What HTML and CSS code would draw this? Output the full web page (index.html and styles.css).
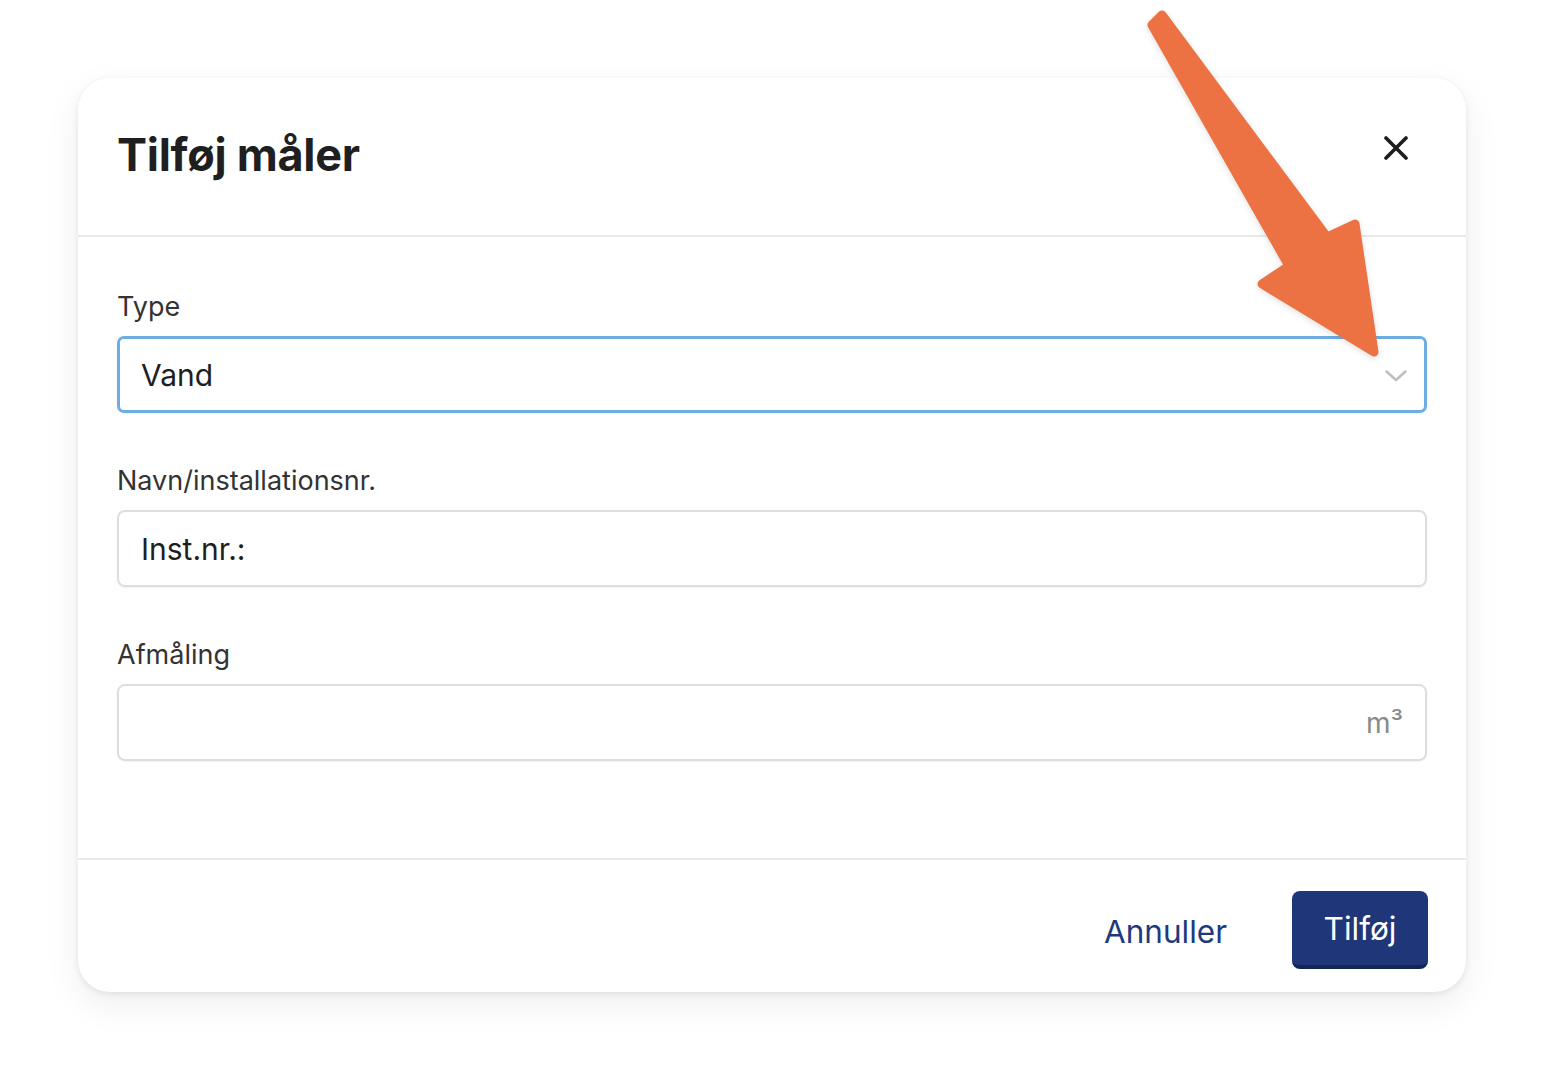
FILE: index.html
```html
<!DOCTYPE html>
<html lang="da">
<head>
    <meta charset="UTF-8">
    <meta name="viewport" content="width=device-width, initial-scale=1.0">
    <title>Tilføj måler</title>
    <link rel="stylesheet" href="styles.css">
</head>
<body>
    <div class="page">
        <div class="modal">
            <div class="modal-head">
                <h1 class="title">Tilføj måler</h1>
                <button type="button" class="close" aria-label="Luk">
                    <svg width="24" height="24" viewBox="0 0 24 24"><path d="M2 2 L22 22 M22 2 L2 22" stroke="#1d1d1d" stroke-width="3.6" stroke-linecap="round" fill="none"/></svg>
                </button>
            </div>
            <div class="modal-body">
                <div class="field">
                    <label class="label">Type</label>
                    <div class="input select">
                        <span class="value">Vand</span>
                        <svg class="chevron" width="22" height="12" viewBox="0 0 22 12"><path d="M1.5 1.5 L11 10 L20.5 1.5" stroke="#bdbdbd" stroke-width="2.4" stroke-linecap="round" stroke-linejoin="round" fill="none"/></svg>
                    </div>
                </div>
                <div class="field">
                    <label class="label">Navn/installationsnr.</label>
                    <div class="input">
                        <span class="value">Inst.nr.:</span>
                    </div>
                </div>
                <div class="field">
                    <label class="label">Afmåling</label>
                    <div class="input unit-input">
                        <span class="value"></span>
                        <span class="unit">m³</span>
                    </div>
                </div>
            </div>
            <div class="modal-foot">
                <button type="button" class="btn-link">Annuller</button>
                <button type="button" class="btn-primary">Tilføj</button>
            </div>
        </div>
    </div>
    <svg class="arrow" width="1544" height="1070" viewBox="0 0 1544 1070">
        <polygon points="1152,25 1162,15 1327,237 1355,224 1374,352 1262,284 1289,266" fill="#ec7244" stroke="#ec7244" stroke-width="9" stroke-linejoin="round"/>
    </svg>
</body>
</html>
```

FILE: styles.css
```css
body {margin: 0; background: #fff; font-family: Inter, "Noto Sans", "Liberation Sans", sans-serif; color: #222;}
.page {padding: 78px 78px 78px 78px;}
.modal {background: #fff; border-radius: 32px; box-shadow: 0 12px 36px rgba(0,0,0,0.07), 0 2px 6px rgba(0,0,0,0.08);}

.modal-head {height: 157px; border-bottom: 2px solid #e9e9e9; display: flex; align-items: center; justify-content: space-between; padding: 0 58px 0 39px;}
.title {margin: 0; font-size: 45px; font-weight: 700; color: #1f1f1f; letter-spacing: -0.3px; position: relative; top: -2px;}
.close {background: none; border: 0; padding: 0; width: 24px; height: 24px; margin-top: -18px; cursor: pointer;}
.close svg {display: block;}

.modal-body {padding: 55px 39px 97px 39px;}
.field {margin-bottom: 53px;}
.field:last-child {margin-bottom: 0;}
.label {display: block; font-size: 27px; line-height: 30px; color: #333; margin-bottom: 14px;}

.input {height: 77px; box-sizing: border-box; border: 2px solid #dedede; border-radius: 8px; display: flex; align-items: center; padding: 0 22px; box-shadow: 0 1px 2px rgba(0,0,0,0.05);}
.input .value {flex: 1; font-size: 30px; color: #1e1e1e;}
.select {border: 3px solid #6dade2; padding: 0 17px 0 21px; border-radius: 7px;}
.chevron {display: block; margin-top: 2px;}
.unit {font-size: 28px; color: #8a8a8a;}

.modal-foot {border-top: 2px solid #e9e9e9; padding: 31px 38px 23px; display: flex; justify-content: flex-end; align-items: center;}
.btn-link {background: none; border: 0; font-family: inherit; font-size: 31.5px; color: #1f3a7c; padding: 0; margin-right: 65px; margin-top: 2px; cursor: pointer;}
.btn-primary {width: 136px; height: 78px; box-sizing: border-box; border: 0; border-radius: 8px; background: #1f3679; border-bottom: 4px solid #132656; color: #fff; font-family: inherit; font-size: 31.5px; padding-top: 2px; cursor: pointer;}

.arrow {position: absolute; top: 0; left: 0; pointer-events: none; filter: drop-shadow(0 2px 3px rgba(0,0,0,0.12));}
```
